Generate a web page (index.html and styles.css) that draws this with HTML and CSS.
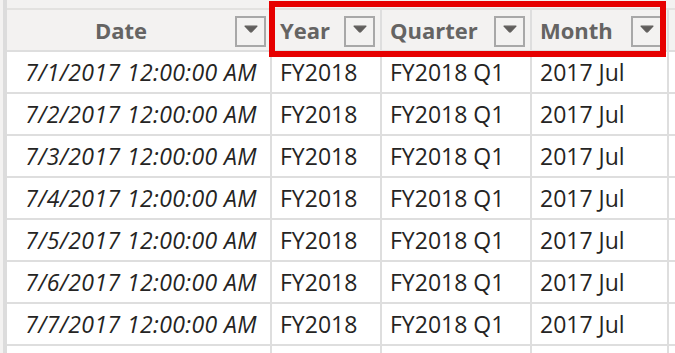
FILE: index.html
```html
<!DOCTYPE html>
<html>
<head>
<meta charset="utf-8">
<link rel="stylesheet" href="styles.css">
</head>
<body>
<div class="frame">
  <div class="strip"></div>
  <div class="table">
    <div class="cell head center"><span class="label">Date</span><span class="dd"><svg width="14" height="8" viewBox="0 0 14 8"><path d="M1 1.2 H13 L7.6 6.8 Q7 7.4 6.4 6.8 Z" fill="#605e5c" stroke="#605e5c" stroke-width="1.2" stroke-linejoin="round"/></svg></span></div>
    <div class="cell head"><span class="label">Year</span><span class="dd"><svg width="14" height="8" viewBox="0 0 14 8"><path d="M1 1.2 H13 L7.6 6.8 Q7 7.4 6.4 6.8 Z" fill="#605e5c" stroke="#605e5c" stroke-width="1.2" stroke-linejoin="round"/></svg></span></div>
    <div class="cell head"><span class="label">Quarter</span><span class="dd"><svg width="14" height="8" viewBox="0 0 14 8"><path d="M1 1.2 H13 L7.6 6.8 Q7 7.4 6.4 6.8 Z" fill="#605e5c" stroke="#605e5c" stroke-width="1.2" stroke-linejoin="round"/></svg></span></div>
    <div class="cell head"><span class="label">Month</span><span class="dd"><svg width="14" height="8" viewBox="0 0 14 8"><path d="M1 1.2 H13 L7.6 6.8 Q7 7.4 6.4 6.8 Z" fill="#605e5c" stroke="#605e5c" stroke-width="1.2" stroke-linejoin="round"/></svg></span></div>
    <div class="cell head"></div>

    <div class="cell date">7/1/2017 12:00:00 AM</div><div class="cell">FY2018</div><div class="cell">FY2018 Q1</div><div class="cell">2017 Jul</div><div class="cell"></div>
    <div class="cell date">7/2/2017 12:00:00 AM</div><div class="cell">FY2018</div><div class="cell">FY2018 Q1</div><div class="cell">2017 Jul</div><div class="cell"></div>
    <div class="cell date">7/3/2017 12:00:00 AM</div><div class="cell">FY2018</div><div class="cell">FY2018 Q1</div><div class="cell">2017 Jul</div><div class="cell"></div>
    <div class="cell date">7/4/2017 12:00:00 AM</div><div class="cell">FY2018</div><div class="cell">FY2018 Q1</div><div class="cell">2017 Jul</div><div class="cell"></div>
    <div class="cell date">7/5/2017 12:00:00 AM</div><div class="cell">FY2018</div><div class="cell">FY2018 Q1</div><div class="cell">2017 Jul</div><div class="cell"></div>
    <div class="cell date">7/6/2017 12:00:00 AM</div><div class="cell">FY2018</div><div class="cell">FY2018 Q1</div><div class="cell">2017 Jul</div><div class="cell"></div>
    <div class="cell date">7/7/2017 12:00:00 AM</div><div class="cell">FY2018</div><div class="cell">FY2018 Q1</div><div class="cell">2017 Jul</div><div class="cell"></div>
    <div class="cell date"></div><div class="cell"></div><div class="cell"></div><div class="cell"></div><div class="cell"></div>
  </div>
  <div class="highlight"></div>
</div>
</body>
</html>
```

FILE: styles.css
```css
html, body {
  margin: 0;
  padding: 0;
  background: #f3f2f1;
  overflow: hidden;
}
.frame {
  position: relative;
  display: flex;
  width: 675px;
  height: 353px;
  overflow: hidden;
  padding-left: 3px;
  box-sizing: border-box;
}
.strip {
  width: 4px;
  flex: none;
  background: #dcdcdc;
}
.table {
  flex: 1;
  margin-top: 8px;
  display: grid;
  grid-template-columns: 263px 108px 148px 135px 1fr;
  grid-template-rows: 40px repeat(8, 40px);
  column-gap: 2px;
  row-gap: 2px;
  border-top: 2px solid #e3e2e0;
  background: #dedede;
  font-family: "Open Sans", "Noto Sans", sans-serif;
  font-size: 23px;
  color: #252423;
}
.cell {
  background: #ffffff;
  display: flex;
  align-items: center;
  padding-left: 8px;
  white-space: nowrap;
  overflow: hidden;
}
.head {
  background: #f3f2f1;
  font-weight: 700;
  font-size: 22px;
  color: #656463;
  padding-right: 5px;
}
.head .label {
  flex: 1;
}
.center {
  padding-left: 0;
  padding-right: 4px;
}
.center .label {
  text-align: center;
}
.dd {
  width: 27px;
  border: 2px solid #a8a8a8;
  flex: none;
  display: flex;
  justify-content: center;
  align-items: flex-start;
  padding-top: 7px;
  box-sizing: content-box;
  height: 20px;
  margin-top: 3px;
}
.date {
  justify-content: flex-end;
  font-style: italic;
  letter-spacing: 0.4px;
  padding-right: 13px;
  padding-left: 0;
}
.highlight {
  position: absolute;
  left: 269px;
  top: 1px;
  width: 385px;
  height: 44px;
  border: 6px solid #e60000;
}
```
